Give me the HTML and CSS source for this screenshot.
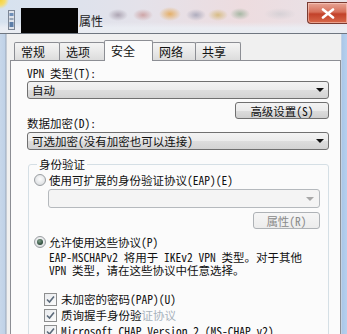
FILE: index.html
```html
<!DOCTYPE html>
<html>
<head>
<meta charset="utf-8">
<link rel="stylesheet" href="styles.css">
</head>
<body>
<div class="win">
  <div class="titlebar">
    <svg class="appicon" width="7" height="20" viewBox="0 0 7 20">
      <rect x="0.5" y="0.5" width="6" height="19" fill="#dfe3ea" stroke="#7d8796"/>
      <rect x="1.5" y="3" width="4" height="3" fill="#6f8fb8"/>
      <rect x="1.5" y="8" width="4" height="2" fill="#9aa7b8"/>
      <rect x="1.5" y="12" width="4" height="5" fill="#5c7ea8"/>
    </svg>
    <div class="redact"></div>
    <div class="title">属性</div>
    <div class="close">
      <svg width="14" height="11" viewBox="0 0 14 11"><path d="M2 1.5 L12 9.5 M12 1.5 L2 9.5" stroke="#fff" stroke-width="2.6" stroke-linecap="round"/></svg>
    </div>
  </div>
  <div class="frame">
    <div class="edge-left"></div>
    <div class="dialog">
      <div class="tabs">
        <div class="tab t1">常规</div>
        <div class="tab t2">选项</div>
        <div class="tab t3 active">安全</div>
        <div class="tab t4">网络</div>
        <div class="tab t5">共享</div>
      </div>
      <div class="panel">
        <div class="label">VPN 类型(T):</div>
        <div class="combo"><span>自动</span><span class="arrow"></span></div>
        <div class="row-adv">
          <div class="label">数据加密(D):</div>
          <div class="btn adv">高级设置(S)</div>
        </div>
        <div class="combo combo2"><span>可选加密(没有加密也可以连接)</span><span class="arrow"></span></div>
        <fieldset class="group">
          <legend>身份验证</legend>
          <div class="opt">
            <span class="radio"></span>
            <span>使用可扩展的身份验证协议(EAP)(E)</span>
          </div>
          <div class="eap">
            <div class="combo disabled"><span></span><span class="arrow"></span></div>
            <div class="btn prop">属性(R)</div>
          </div>
          <div class="opt opt2">
            <span class="radio on"></span>
            <span>允许使用这些协议(P)</span>
          </div>
          <div class="desc">EAP-MSCHAPv2 将用于 IKEv2 VPN 类型。对于其他<br>VPN 类型，请在这些协议中任意选择。</div>
          <div class="checks">
            <div class="chk"><span class="box"><svg width="11" height="11" viewBox="0 0 11 11"><path d="M2 5.5 L4.5 8 L9 2.5" fill="none" stroke="#5b6a7a" stroke-width="1.6"/></svg></span><span>未加密的密码(PAP)(U)</span></div>
            <div class="chk"><span class="box"><svg width="11" height="11" viewBox="0 0 11 11"><path d="M2 5.5 L4.5 8 L9 2.5" fill="none" stroke="#5b6a7a" stroke-width="1.6"/></svg></span><span>质询握手身份验<span class="fade">证协议</span></span></div>
            <div class="chk"><span class="box"><svg width="11" height="11" viewBox="0 0 11 11"><path d="M2 5.5 L4.5 8 L9 2.5" fill="none" stroke="#5b6a7a" stroke-width="1.6"/></svg></span><span>Microsoft CHAP Version 2 (MS-CHAP v2)</span></div>
          </div>
        </fieldset>
      </div>
    </div>
    <div class="edge-right"></div>
  </div>
</div>
</body>
</html>
```

FILE: styles.css
```css
* { box-sizing: border-box; }
html, body { margin: 0; padding: 0; }
body {
  width: 347px;
  height: 334px;
  overflow: hidden;
  font-family: "Noto Sans Mono CJK SC", "Noto Sans CJK SC", "DejaVu Sans Mono", monospace;
  font-size: 11.5px;
  color: #111;
}
.win { width: 347px; height: 334px; display: flex; flex-direction: column; }

.titlebar {
  height: 34px;
  flex: none;
  display: flex;
  align-items: flex-start;
  border-bottom: 1px solid #6f7680;
  background:
    radial-gradient(circle at 0 0, #f4d23a 0, #f6dc6a 5px, rgba(246,220,106,0) 9px),
    radial-gradient(ellipse 10px 6px at 118px 15px, rgba(160,150,165,.8), rgba(160,150,165,0)),
    radial-gradient(ellipse 10px 6px at 143px 15px, rgba(200,150,150,.8), rgba(200,150,150,0)),
    radial-gradient(ellipse 11px 7px at 170px 14px, rgba(228,170,90,.9), rgba(228,170,90,0)),
    radial-gradient(ellipse 10px 6px at 196px 15px, rgba(160,160,180,.8), rgba(160,160,180,0)),
    radial-gradient(ellipse 10px 6px at 218px 15px, rgba(210,180,110,.8), rgba(210,180,110,0)),
    radial-gradient(ellipse 10px 6px at 240px 14px, rgba(150,175,150,.8), rgba(150,175,150,0)),
    radial-gradient(ellipse 16px 6px at 280px 14px, rgba(200,200,205,.6), rgba(200,200,205,0)),
    linear-gradient(to bottom, rgba(255,255,255,0) 0, rgba(255,255,255,0) 22px, rgba(235,238,244,.9) 28px, #e9ecf1 33px),
    linear-gradient(to right, #d6e2ef 0, #e4e2ea 40%, #eddcdf 70%, #e8e2e8 100%);
}
.appicon { margin: 10px 0 0 8px; flex: none; }
.redact {
  width: 57px;
  height: 25px;
  margin: 8px 0 0 6px;
  background: #050505;
  flex: none;
}
.title { margin: 14px 0 0 1px; line-height: 14px; font-size: 12px; color: #1a1a1a; font-family: "Noto Sans CJK SC", sans-serif; }
.close {
  margin-left: auto;
  margin-top: 2px;
  width: 40px;
  height: 22px;
  border: 1px solid #7a3b32;
  border-right: none;
  border-radius: 0 0 0 4px;
  background: linear-gradient(to bottom, #e7a596 0, #d7705a 45%, #c2412a 55%, #d9694b 100%);
  display: flex;
  align-items: center;
  justify-content: center;
  box-shadow: inset 0 0 0 1px rgba(255,220,210,.5);
}

.frame { flex: 1; display: flex; min-height: 0; }
.edge-left {
  width: 7px; flex: none;
  background: linear-gradient(to right, #c7d7ea 0, #bfd1e7 5px, #9aa6b6 6px, #eef0f3 7px);
}
.edge-right {
  width: 6px; flex: none;
  background: linear-gradient(to right, #d8dde4 0, #aac7e8 1px, #b6d0ee 6px);
}
.dialog {
  flex: 1;
  background: #f0f0f0;
  padding: 6px 0 0 3px;
  display: flex;
  flex-direction: column;
}

.tabs { height: 20px; display: flex; align-items: flex-end; padding-left: 4px; }
.tab {
  height: 18px;
  border: 1px solid #8c8e94;
  border-bottom: none;
  border-radius: 2px 2px 0 0;
  background: linear-gradient(to bottom, #f4f4f4 0, #e9e9e9 50%, #dcdcdc 100%);
  padding-left: 6px;
  line-height: 17px;
  margin-left: -1px;
  color: #111;
  font-size: 12px;
}
.t1 { width: 46px; margin-left: 0; }
.t2 { width: 46px; }
.t3 { width: 49px; }
.t4 { width: 44px; }
.t5 { width: 46px; }
.tab.active {
  height: 21px;
  margin-bottom: -1px;
  background: #fbfbfb;
  position: relative;
  z-index: 1;
  line-height: 17px;
  padding-top: 1px;
}

.panel {
  flex: 1;
  border: 1px solid #8c8e94;
  border-bottom: none;
  background: #fbfbfb;
  padding: 5px 11px 0 16px;
}
.label { line-height: 14px; }
.combo {
  margin-top: 1px;
  height: 18px;
  border: 1px solid #707070;
  border-radius: 3px;
  background: linear-gradient(to bottom, #f3f3f3 0, #ebebeb 50%, #dddddd 51%, #d3d3d3 100%);
  display: flex;
  align-items: center;
  padding-left: 4px;
  line-height: 14px;
}
.arrow {
  margin-left: auto;
  margin-right: 4px;
  width: 0; height: 0;
  border-left: 4px solid transparent;
  border-right: 4px solid transparent;
  border-top: 4px solid #111;
}
.row-adv { display: flex; height: 28px; margin-top: 3px; }
.row-adv .label { align-self: flex-end; }
.btn {
  height: 17px;
  border: 1px solid #707070;
  border-radius: 3px;
  background: linear-gradient(to bottom, #f3f3f3 0, #ebebeb 50%, #dddddd 51%, #cfcfcf 100%);
  display: flex;
  align-items: center;
  justify-content: center;
  line-height: 14px;
}
.adv { margin-left: auto; width: 94px; align-self: flex-start; }
.combo2 { margin-top: 2px; }

.group {
  margin: 7px 0 0 1px;
  padding: 2px 8px 0 5px;
  border: 1px solid #d5dfe5;
  border-radius: 3px;
  height: 200px;
}
.group legend { padding: 0 2px; margin-left: 3px; line-height: 14px; }
.opt { display: flex; align-items: center; height: 14px; }
.radio {
  width: 12px; height: 12px;
  border-radius: 50%;
  border: 1px solid #9a9ea2;
  background: radial-gradient(circle at 50% 40%, #fdfdfd 0, #e4e6e8 60%, #cfd3d6 100%);
  margin-right: 3px;
  flex: none;
  display: flex;
  align-items: center;
  justify-content: center;
}
.radio.on::after {
  content: "";
  width: 6px; height: 6px;
  border-radius: 50%;
  background: radial-gradient(circle at 40% 35%, #7fa08a 0, #2d4a3a 70%, #1c2e24 100%);
}
.eap { margin: 2px 0 0 14px; display: flex; flex-direction: column; }
.combo.disabled {
  height: 19px;
  margin-top: 0;
  border-color: #b5b9bd;
  background: #f4f4f4;
}
.combo.disabled .arrow { border-top-color: #a8a8a8; margin-right: 5px; }
.prop { margin: 4px 0 0 auto; width: 67px; color: #8a8a8a; border-color: #aeb2b6; background: linear-gradient(to bottom, #f6f6f6, #ececec); }
.opt2 { margin-top: 6px; }
.desc { margin: 2px 0 0 15px; line-height: 13px; white-space: nowrap; }
.checks { margin: 15px 0 0 10px; display: flex; flex-direction: column; gap: 2px; }
.chk { display: flex; align-items: center; height: 14px; white-space: nowrap; }
.box {
  width: 13px; height: 13px;
  border: 1px solid #8e8f8f;
  background: linear-gradient(to bottom right, #e9ebee, #fbfbfb);
  margin-right: 4px;
  flex: none;
  display: flex;
  align-items: center;
  justify-content: center;
}
.fade { color: #a8b2bc; }
```
